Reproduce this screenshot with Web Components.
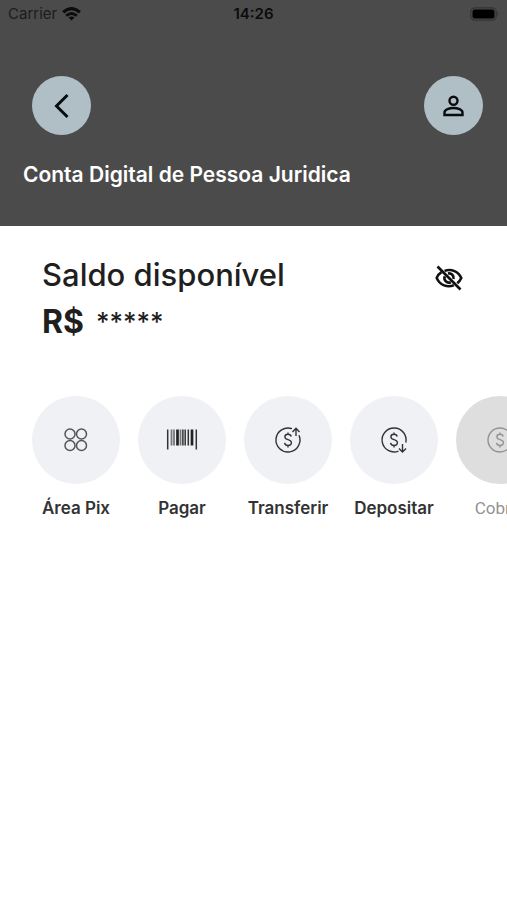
<!DOCTYPE html>
<html lang="pt-BR">
<head>
<meta charset="utf-8">
<meta name="viewport" content="width=device-width, initial-scale=1">
<title>Conta Digital</title>
<style>
html { background: #fff; }
body { margin: 0; font-family: Inter, "Liberation Sans", sans-serif; color: #1f1f1f; overflow-x: hidden; }
</style>
</head>
<body>
<account-page></account-page>
<script>
function define(name, html, setup) {
  const template = document.createElement('template');
  template.innerHTML = html;
  customElements.define(name, class extends HTMLElement {
    constructor() {
      super();
      this.attachShadow({ mode: 'open' }).append(template.content.cloneNode(true));
    }
    connectedCallback() { if (setup) setup(this); }
  });
}

define('status-bar', `
<style>
:host { display: grid; grid-template-columns: 1fr auto 1fr; align-items: center; height: 28px; padding: 0 8px; color: #0c0c0c; font-size: 15px; line-height: 20px; }
.left { display: flex; align-items: center; gap: 5px; color: #1c1c1c; }
time { font-weight: 600; }
svg { display: block; }
.battery { justify-self: end; }
</style>
<div class="left"><span>Carrier</span>
<svg width="19" height="14" viewBox="0 0 19 14" fill="none" stroke="#0c0c0c" aria-hidden="true"><path d="M1.200 5.200Q9.500-2 17.800 5.200" stroke-width="3.200"/><path d="M4.200 8.700Q9.500 4.200 14.800 8.700" stroke-width="2.800"/><path d="M6.500 10.600Q9.500 8.200 12.500 10.600L9.500 13.600Z" fill="#0c0c0c" stroke="none"/></svg></div>
<time>14:26</time>
<svg class="battery" width="30" height="14" viewBox="0 0 30 14" aria-hidden="true"><rect x="1.800" y=".8" width="25.400" height="12.400" rx="4" fill="none" stroke="#343434" stroke-width="1.200"/><rect x="3.500" y="2.500" width="22" height="9" rx="2.300" fill="#000"/><path d="M28.500 5q2 2 0 4z" fill="#343434"/></svg>`);

define('round-button', `
<style>
:host { display: block; }
button { display: grid; place-items: center; width: 59px; height: 59px; padding: 0; border: 0; border-radius: 50%; background: #b0bec5; color: #080c0e; cursor: pointer; }
::slotted(svg) { display: block; }
</style>
<button type="button"><slot></slot></button>`, host => {
  host.shadowRoot.querySelector('button').setAttribute('aria-label', host.getAttribute('label'));
});

define('account-header', `
<style>
:host { display: block; background: #4b4b4b; padding-bottom: 38px; }
nav { display: flex; justify-content: space-between; padding: 48px 24px 0 32px; }
h1 { margin: 27px 23px 0; color: #fff; font-size: 21px; line-height: 26px; font-weight: 600; white-space: nowrap; }
</style>
<status-bar></status-bar>
<nav>
<round-button label="Voltar"><svg width="32" height="32" viewBox="0 0 32 32" fill="none" stroke="currentColor" stroke-width="3"><path d="M21.500 5L10.500 16L21.500 27"/></svg></round-button>
<round-button label="Perfil"><svg width="30" height="30" viewBox="0 0 30 30" fill="none" stroke="currentColor" stroke-width="2.400"><circle cx="14.500" cy="9.800" r="4"/><path d="M5.500 24V21.500C5.500 18.600 10.500 17 14.500 17S23.500 18.600 23.500 21.500V24Z"/></svg></round-button>
</nav>
<h1><slot></slot></h1>`);

define('balance-panel', `
<style>
:host { display: flex; justify-content: space-between; align-items: flex-start; padding: 30px 42px 0; }
h2 { margin: 0; font-size: 31px; line-height: 38px; font-weight: 500; }
p { display: flex; gap: 12px; margin: 8px 0 0; font-size: 26px; line-height: 40px; font-weight: 500; }
strong { font-size: 32px; font-weight: 700; }
button { display: block; margin-top: 6px; padding: 0; border: 0; background: none; color: #111; cursor: pointer; }
svg { display: block; }
</style>
<div><h2>Saldo disponível</h2><p><strong>R$</strong><span>*****</span></p></div>
<button type="button" aria-label="Mostrar saldo">
<svg width="32" height="32" viewBox="0 0 32 32" fill="none" stroke="currentColor" stroke-width="2.600"><path d="M11.500 8.900C18.500 6.400 25.500 9.500 28.300 16C27.300 18.200 26 19.800 24.300 21.300M8.500 10.200C6.300 11.600 4.600 13.500 3.700 16C7 23.500 14.500 25.800 20.800 23.300"/><path d="M15 11.500C18.500 10.800 21.200 13.700 20.500 17M11.800 14.200C10.200 18 14 21.800 17.800 20.200"/><path d="M4.500 4.500L27.500 27.500"/></svg>
</button>`);

const coin = '<path d="M18.200 11.500C17.800 9.900 16.600 9.300 15 9.300C13.200 9.300 11.900 10.200 11.900 11.900C11.900 15.600 18.400 13.700 18.400 17.600C18.400 19.500 17 20.500 15 20.500C13.100 20.500 11.900 19.500 11.600 17.900M15 7.400V9.300M15 20.500V22.400"/>';
const icons = {
  pix: '<g stroke="#555" stroke-width="1.500"><circle cx="9" cy="9" r="5"/><circle cx="20.500" cy="9" r="5"/><circle cx="9" cy="20.500" r="5"/><circle cx="20.500" cy="20.500" r="5"/></g>',
  barcode: '<path d="M.7 4.500V24.500M29.300 4.500V24.500M18.200 4.500V20.500M15.900 4.500V20.500M21.300 4.500V20.500" stroke-width="1.500"/><path d="M4.500 4.500V20.500M7 4.500V20.500M13.500 4.500V20.500" stroke-width="1.800" stroke="#777"/><path d="M10.500 4.500V20.500M25 4.500V20.500" stroke-width="2.700" stroke="#222"/>',
  transfer: '<path d="M19 3.700A12 12 0 1 0 26 10.300"/><path d="M23 11V3.500M19.500 7L23 3.300L26.500 7"/>' + coin,
  deposit: '<path d="M19.500 26.100A12 12 0 1 1 26.800 17.500"/><path d="M23.500 19V26.500M20 23.500L23.500 27L27 23.500"/>' + coin,
  charge: '<circle cx="15" cy="15" r="12"/>' + coin
};

define('quick-action', `
<style>
:host { display: block; flex: 0 0 88px; --tile: #eff1f5; color: #333; }
:host([disabled]) { --tile: #dedede; color: #929292; font-family: Roboto, sans-serif; }
button { display: flex; flex-direction: column; align-items: center; gap: 13px; width: 100%; padding: 0; border: 0; background: none; color: inherit; font-family: inherit; font-size: 17px; font-weight: 600; line-height: 22px; white-space: nowrap; cursor: pointer; }
:host([disabled]) button { font-weight: 400; }
.tile { display: grid; place-items: center; width: 88px; height: 88px; border-radius: 50%; background: var(--tile); }
svg { display: block; width: 32px; height: 32px; fill: none; stroke: currentColor; stroke-width: 1.400; }
</style>
<button type="button"><span class="tile"><svg viewBox="-1 -1 32 32" aria-hidden="true"></svg></span><span><slot></slot></span></button>`, host => {
  host.shadowRoot.querySelector('svg').innerHTML = icons[host.getAttribute('icon')];
  host.shadowRoot.querySelector('button').disabled = host.hasAttribute('disabled');
});

define('action-row', `
<style>
:host { display: flex; gap: 18px; padding: 54px 32px 0; overflow-x: auto; scrollbar-width: none; }
</style>
<slot></slot>`);

define('account-page', `
<style>
:host { display: block; min-height: 100vh; background: #fff; }
</style>
<account-header>Conta Digital de Pessoa Juridica</account-header>
<main>
<balance-panel></balance-panel>
<action-row>
<quick-action icon="pix">Área Pix</quick-action>
<quick-action icon="barcode">Pagar</quick-action>
<quick-action icon="transfer">Transferir</quick-action>
<quick-action icon="deposit">Depositar</quick-action>
<quick-action icon="charge" disabled>Cobrar</quick-action>
</action-row>
</main>`);
</script>
</body>
</html>
